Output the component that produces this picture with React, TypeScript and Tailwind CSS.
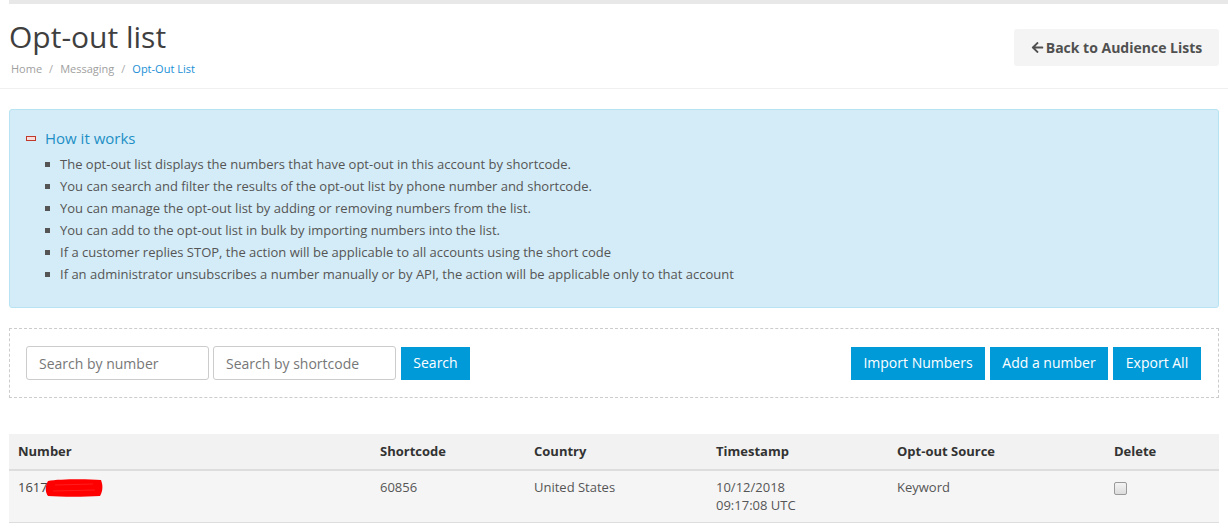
import { FaArrowLeft } from "react-icons/fa"

const howItWorks = [
    'The opt-out list displays the numbers that have opt-out in this account by shortcode.',
    'You can search and filter the results of the opt-out list by phone number and shortcode.',
    'You can manage the opt-out list by adding or removing numbers from the list.',
    'You can add to the opt-out list in bulk by importing numbers into the list.',
    'If a customer replies STOP, the action will be applicable to all accounts using the short code',
    'If an administrator unsubscribes a number manually or by API, the action will be applicable only to that account',
]

const columns = [
    { label: 'Number', width: 'w-[362px]' },
    { label: 'Shortcode', width: 'w-[154px]' },
    { label: 'Country', width: 'w-[182px]' },
    { label: 'Timestamp', width: 'w-[181px]' },
    { label: 'Opt-out Source', width: 'w-[217px]' },
    { label: 'Delete', width: 'w-[114px]' },
]

function Redacted() {
    return (
        <svg width="58" height="18" viewBox="0 0 58 18" className="-ml-[3px] inline-block align-[-5px]">
            <path
                d="M3 2 C14 0, 42 0, 56 1 C58 6, 58 12, 55 17 C40 18, 16 18, 3 17 C0 13, 0 7, 3 2 Z"
                fill="#ff0000"
            />
            <path d="M10 6 L48 5 M8 12 L50 11" stroke="#ff3030" strokeWidth="1" opacity="0.6" />
        </svg>
    )
}

export default function App() {
    return (
        <div className="min-h-[530px] w-full bg-white font-['Open_Sans',sans-serif] text-[13px] text-[#555]">
            <div className="ml-[9px] h-[4px] bg-[#e8e8e8]" />

            <div className="flex items-start justify-between border-b border-[#f0f0f0] px-[9px] pb-[11px]">
                <div>
                    <h1 className="pt-[16px] text-[30px] leading-[33px] text-[#3f3f3f]">Opt-out list</h1>
                    <nav className="mt-[8px] flex items-center pl-[2px] text-[11px] leading-[16px]">
                        <span className="text-[#a0a0a0]">Home</span>
                        <span className="px-[7px] text-[#aaa]">/</span>
                        <span className="text-[#a0a0a0]">Messaging</span>
                        <span className="px-[7px] text-[#aaa]">/</span>
                        <span className="text-[#1a8fd6]">Opt-Out List</span>
                    </nav>
                </div>
                <button className="mt-[25px] flex h-[37px] w-[205px] items-center justify-center gap-[2px] rounded-[3px] bg-[#f4f4f4] text-[14px] font-bold text-[#505050]">
                    <FaArrowLeft className="h-[13px] w-[13px]" />
                    Back to Audience Lists
                </button>
            </div>

            <div className="mx-[9px] mt-[20px] rounded-[3px] border border-[#b7e3f3] bg-[#d4ecf7] pl-[16px] pt-[18px] pb-[22px]">
                <div className="flex items-center gap-[9px] text-[15px] leading-[20px] text-[#1d8fc6]">
                    <span className="h-[5px] w-[10px] border border-[#c0392b] bg-[#f7dcdc]" />
                    How it works
                </div>
                <ul className="mt-[5px] pl-[19px]">
                    {howItWorks.map((item) => (
                        <li key={item} className="flex items-center gap-[10px] leading-[22px]">
                            <span className="h-[5px] w-[5px] shrink-0 bg-[#555]" />
                            {item}
                        </li>
                    ))}
                </ul>
            </div>

            <div className="mx-[9px] mt-[20px] flex h-[70px] items-center justify-between border border-dashed border-[#ccc] pl-[16px] pr-[17px]">
                <div className="flex items-center gap-[4px]">
                    <input
                        placeholder="Search by number"
                        className="h-[34px] w-[183px] rounded-[3px] border border-[#ccc] px-[12px] text-[14px] placeholder:text-[#777]"
                    />
                    <input
                        placeholder="Search by shortcode"
                        className="h-[34px] w-[183px] rounded-[3px] border border-[#ccc] px-[12px] text-[14px] placeholder:text-[#777]"
                    />
                    <button className="ml-[1px] h-[33px] w-[69px] bg-[#009ad9] pb-[2px] text-[14px] text-white">Search</button>
                </div>
                <div className="flex items-center gap-[5px]">
                    <button className="h-[33px] w-[134px] bg-[#009ad9] pb-[2px] text-[14px] text-white">Import Numbers</button>
                    <button className="h-[33px] w-[118px] bg-[#009ad9] pb-[2px] text-[14px] text-white">Add a number</button>
                    <button className="h-[33px] w-[88px] bg-[#009ad9] pb-[2px] text-[14px] text-white">Export All</button>
                </div>
            </div>

            <table className="mx-[9px] mt-[36px] w-[1210px] table-fixed border-collapse text-left">
                <colgroup>
                    {columns.map((c) => (
                        <col key={c.label} className={c.width} />
                    ))}
                </colgroup>
                <thead>
                    <tr className="h-[36px] border-b-2 border-[#ddd] bg-[#f2f2f2]">
                        {columns.map((c) => (
                            <th key={c.label} className="px-[9px] font-bold text-[#333]">
                                {c.label}
                            </th>
                        ))}
                    </tr>
                </thead>
                <tbody>
                    <tr className="border-b border-[#ddd] bg-[#f5f5f5] align-top leading-[18px]">
                        <td className="px-[9px] pt-[7px] pb-[8px] text-[#444]">
                            1617
                            <Redacted />
                        </td>
                        <td className="px-[9px] pt-[7px]">60856</td>
                        <td className="px-[9px] pt-[7px]">United States</td>
                        <td className="px-[9px] pt-[7px] pb-[8px]">
                            10/12/2018
                            <br />
                            09:17:08 UTC
                        </td>
                        <td className="px-[9px] pt-[7px]">Keyword</td>
                        <td className="px-[9px] pt-[11px]">
                            <span className="block h-[13px] w-[13px] rounded-[2px] border border-[#9a9a9a] bg-gradient-to-b from-[#f4f4f4] to-[#dcdcdc]" />
                        </td>
                    </tr>
                </tbody>
            </table>
        </div>
    )
}
